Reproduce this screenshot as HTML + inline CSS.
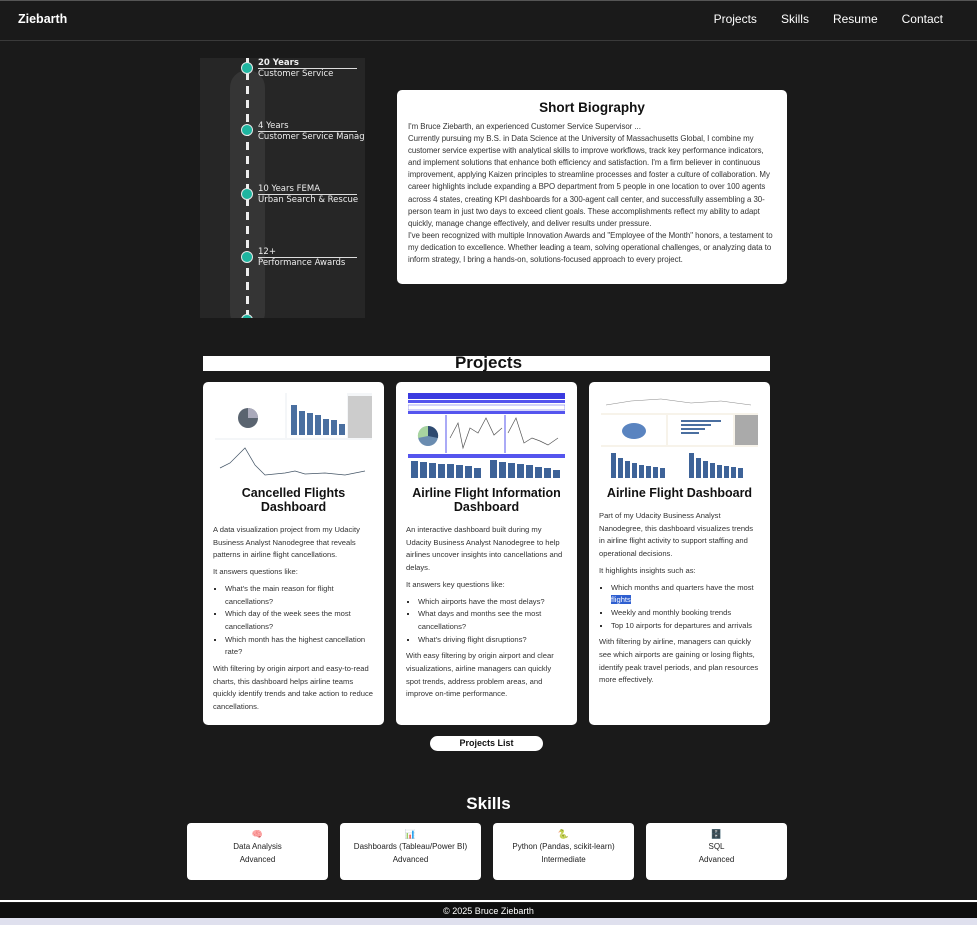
<!DOCTYPE html>
<html><head><meta charset="utf-8">
<style>
*{box-sizing:border-box;margin:0;padding:0}
html,body{width:977px;height:925px;overflow:hidden}
body{background:#1a1a1a;font-family:"Liberation Sans",Arial,sans-serif;color:#333;position:relative}
.nav{position:absolute;left:0;top:0;width:977px;height:41px;border-top:1px solid #555;border-bottom:1px solid #3a3a3a;background:#1a1a1a}
.nav .logo{position:absolute;left:18px;top:11px;color:#fff;font-weight:bold;font-size:12.5px}
.nav .links{position:absolute;right:34px;top:11px;color:#fff;font-size:12px}
.nav .links span{margin-left:24px}
.tl{position:absolute;left:200px;top:58px;width:165px;height:260px;background:#262626;overflow:hidden}
.pill{position:absolute;left:30px;top:12px;width:35px;height:260px;border-radius:18px;background:#353535}
.dash{position:absolute;left:46px;top:0;width:3px;height:260px;background:repeating-linear-gradient(#eee 0 8px,transparent 8px 14px)}
.dot{position:absolute;left:41px;width:12px;height:12px;border-radius:50%;background:#1fb5a0;border:1.5px solid #e8e8e8}
.ti{position:absolute;left:58px;color:#eee;font-family:"DejaVu Sans",sans-serif;font-size:8.5px;line-height:10px;white-space:nowrap}
.ti .h{border-bottom:1px solid #ddd;width:99px;display:block}
.bio{position:absolute;left:397px;top:90px;width:390px;height:194px;background:#fff;border-radius:5px;padding:10px 11px}
.bio h2{text-align:center;font-size:13.5px;color:#111;margin-bottom:6px}
.bio p{font-size:7.9px;line-height:12.1px;color:#333;letter-spacing:-0.05px}
.pbar{position:absolute;left:203px;top:356px;width:567px;height:15px;background:#fff}
.ptitle{position:absolute;left:0;width:977px;top:353px;text-align:center;font-size:17px;font-weight:bold;color:#111}
.card{position:absolute;top:382px;width:181px;height:343px;background:#fff;border-radius:5px;padding:11px 10px}
.card svg{display:block;width:157px;height:87px;margin:0 2px}
.card h3{text-align:center;font-size:12.5px;color:#111;line-height:14px;margin:6px 0 10px}
.card p,.card li{font-size:7.6px;line-height:12.7px;color:#333}
.card p{margin-bottom:4px}
.card ul{padding-left:10px;margin-bottom:4px;font-size:7.6px}
.card ul li{list-style:none;position:relative;padding-left:2px}
.card ul li:before{content:"";position:absolute;left:-9px;top:5px;width:2px;height:2px;background:#333}
.btn{position:absolute;left:430px;top:736px;width:113px;height:15px;border-radius:8px;background:#fff;text-align:center;font-size:9px;font-weight:bold;line-height:15px;color:#111}
.stitle{position:absolute;left:0;width:977px;top:794px;text-align:center;font-size:17px;font-weight:bold;color:#fff}
.sk{position:absolute;top:823px;width:141px;height:57px;background:#fff;border-radius:4px;text-align:center;font-size:8px;line-height:12.5px;padding-top:5px;color:#222}
.ico{font-size:9px;display:block;height:13px;line-height:13px}
.f1{position:absolute;left:0;top:900px;width:977px;height:2px;background:#fff}
.f2{position:absolute;left:0;top:903px;width:977px;height:15px;background:#0e0e0e;color:#fff;text-align:center;font-size:9px;line-height:17px}
.f3{position:absolute;left:0;top:918px;width:977px;height:7px;background:#dfe0ee}
.hl{background:#2f5fd0;color:#fff}
</style></head><body>
<div class="nav"><div class="logo">Ziebarth</div><div class="links"><span>Projects</span><span>Skills</span><span>Resume</span><span>Contact</span></div></div>

<div class="tl">
<div class="pill"></div><div class="dash"></div>
<div class="dot" style="top:4px"></div>
<div class="dot" style="top:66px"></div>
<div class="dot" style="top:130px"></div>
<div class="dot" style="top:193px"></div>
<div class="dot" style="top:256px"></div>
<div class="ti" style="top:0"><b class="h">20 Years</b>Customer Service</div>
<div class="ti" style="top:63px"><span class="h">4 Years</span>Customer Service Manager</div>
<div class="ti" style="top:126px"><span class="h">10 Years FEMA</span>Urban Search &amp; Rescue</div>
<div class="ti" style="top:189px"><span class="h">12+</span>Performance Awards</div>
</div>

<div class="bio"><h2>Short Biography</h2>
<p>I'm Bruce Ziebarth, an experienced Customer Service Supervisor ...<br>
Currently pursuing my B.S. in Data Science at the University of Massachusetts Global, I combine my customer service expertise with analytical skills to improve workflows, track key performance indicators, and implement solutions that enhance both efficiency and satisfaction. I'm a firm believer in continuous improvement, applying Kaizen principles to streamline processes and foster a culture of collaboration. My career highlights include expanding a BPO department from 5 people in one location to over 100 agents across 4 states, creating KPI dashboards for a 300-agent call center, and successfully assembling a 30-person team in just two days to exceed client goals. These accomplishments reflect my ability to adapt quickly, manage change effectively, and deliver results under pressure.<br>
I've been recognized with multiple Innovation Awards and "Employee of the Month" honors, a testament to my dedication to excellence. Whether leading a team, solving operational challenges, or analyzing data to inform strategy, I bring a hands-on, solutions-focused approach to every project.</p></div>

<div class="pbar"></div><div class="ptitle">Projects</div>

<div class="card" style="left:203px">
<svg viewBox="0 0 157 87"><rect width="157" height="87" fill="#f4f6f8"/><rect x="0" y="0" width="70" height="45" fill="#fff"/><circle cx="33" cy="25" r="10" fill="#5a6470"/><path d="M33 25 L33 15 A10 10 0 0 1 43 25Z" fill="#aab"/><rect x="72" y="0" width="60" height="45" fill="#fff"/><g fill="#4a6fa0"><rect x="76" y="12" width="6" height="30"/><rect x="84" y="18" width="6" height="24"/><rect x="92" y="20" width="6" height="22"/><rect x="100" y="22" width="6" height="20"/><rect x="108" y="26" width="6" height="16"/><rect x="116" y="27" width="6" height="15"/><rect x="124" y="31" width="6" height="11"/></g><rect x="133" y="3" width="24" height="42" fill="#ccc"/><rect x="0" y="47" width="157" height="40" fill="#fff"/><polyline points="5,75 15,70 30,55 40,72 50,82 70,80 80,78 90,81 110,80 130,82 150,78" fill="none" stroke="#456" stroke-width=".7"/></svg>
<h3>Cancelled Flights Dashboard</h3>
<p>A data visualization project from my Udacity Business Analyst Nanodegree that reveals patterns in airline flight cancellations.</p>
<p>It answers questions like:</p>
<ul><li>What's the main reason for flight cancellations?</li><li>Which day of the week sees the most cancellations?</li><li>Which month has the highest cancellation rate?</li></ul>
<p>With filtering by origin airport and easy-to-read charts, this dashboard helps airline teams quickly identify trends and take action to reduce cancellations.</p>
</div>

<div class="card" style="left:396px">
<svg viewBox="0 0 157 87"><rect width="157" height="87" fill="#fff"/><rect width="157" height="6" fill="#3b3be0"/><rect y="7" width="157" height="3" fill="#5555ee"/><rect y="18" width="157" height="3" fill="#5555ee"/><rect y="12" width="157" height="5" fill="#fff" stroke="#55e" stroke-width=".5"/><circle cx="20" cy="43" r="10" fill="#6a8cb0"/><path d="M20 43 L20 33 A10 10 0 0 1 30 45Z" fill="#2e4a70"/><path d="M20 43 L10 45 A10 10 0 0 1 20 33Z" fill="#a8d4a0"/><line x1="38" y1="22" x2="38" y2="60" stroke="#55e"/><line x1="97" y1="22" x2="97" y2="60" stroke="#55e"/><polyline points="42,45 50,30 55,55 62,35 70,40 78,25 86,42 94,35" fill="none" stroke="#555" stroke-width=".7"/><polyline points="100,40 108,25 116,50 124,45 132,48 140,52 150,45" fill="none" stroke="#555" stroke-width=".7"/><rect y="61" width="157" height="4" fill="#5555ee"/><g fill="#3e6398"><rect x="3" y="68" width="7" height="17"/><rect x="12" y="69" width="7" height="16"/><rect x="21" y="70" width="7" height="15"/><rect x="30" y="71" width="7" height="14"/><rect x="39" y="71" width="7" height="14"/><rect x="48" y="72" width="7" height="13"/><rect x="57" y="73" width="7" height="12"/><rect x="66" y="75" width="7" height="10"/><rect x="82" y="67" width="7" height="18"/><rect x="91" y="69" width="7" height="16"/><rect x="100" y="70" width="7" height="15"/><rect x="109" y="71" width="7" height="14"/><rect x="118" y="72" width="7" height="13"/><rect x="127" y="74" width="7" height="11"/><rect x="136" y="75" width="7" height="10"/><rect x="145" y="77" width="7" height="8"/></g></svg>
<h3>Airline Flight Information Dashboard</h3>
<p>An interactive dashboard built during my Udacity Business Analyst Nanodegree to help airlines uncover insights into cancellations and delays.</p>
<p>It answers key questions like:</p>
<ul><li>Which airports have the most delays?</li><li>What days and months see the most cancellations?</li><li>What's driving flight disruptions?</li></ul>
<p>With easy filtering by origin airport and clear visualizations, airline managers can quickly spot trends, address problem areas, and improve on-time performance.</p>
</div>

<div class="card" style="left:589px">
<svg viewBox="0 0 157 87"><rect width="157" height="87" fill="#f7f3ea"/><rect width="157" height="20" fill="#fff"/><polyline points="5,12 30,8 60,6 90,10 120,8 150,12" fill="none" stroke="#888" stroke-width=".5"/><rect y="22" width="65" height="30" fill="#fff"/><ellipse cx="33" cy="38" rx="12" ry="8" fill="#5a84c0"/><rect x="67" y="22" width="65" height="30" fill="#fff"/><g fill="#4a6fa0"><rect x="80" y="27" width="40" height="2"/><rect x="80" y="31" width="30" height="2"/><rect x="80" y="35" width="24" height="2"/><rect x="80" y="39" width="18" height="2"/></g><rect x="134" y="22" width="23" height="30" fill="#aaa"/><rect y="54" width="157" height="33" fill="#fff"/><g fill="#3e6398"><rect x="10" y="60" width="5" height="25"/><rect x="17" y="65" width="5" height="20"/><rect x="24" y="68" width="5" height="17"/><rect x="31" y="70" width="5" height="15"/><rect x="38" y="72" width="5" height="13"/><rect x="45" y="73" width="5" height="12"/><rect x="52" y="74" width="5" height="11"/><rect x="59" y="75" width="5" height="10"/><rect x="88" y="60" width="5" height="25"/><rect x="95" y="65" width="5" height="20"/><rect x="102" y="68" width="5" height="17"/><rect x="109" y="70" width="5" height="15"/><rect x="116" y="72" width="5" height="13"/><rect x="123" y="73" width="5" height="12"/><rect x="130" y="74" width="5" height="11"/><rect x="137" y="75" width="5" height="10"/></g></svg>
<h3>Airline Flight Dashboard</h3>
<p>Part of my Udacity Business Analyst Nanodegree, this dashboard visualizes trends in airline flight activity to support staffing and operational decisions.</p>
<p>It highlights insights such as:</p>
<ul><li>Which months and quarters have the most <span class="hl">flights</span></li><li>Weekly and monthly booking trends</li><li>Top 10 airports for departures and arrivals</li></ul>
<p>With filtering by airline, managers can quickly see which airports are gaining or losing flights, identify peak travel periods, and plan resources more effectively.</p>
</div>

<div class="btn">Projects List</div>

<div class="stitle">Skills</div>
<div class="sk" style="left:187px"><span class="ico">🧠</span>Data Analysis<br>Advanced</div>
<div class="sk" style="left:340px"><span class="ico">📊</span>Dashboards (Tableau/Power BI)<br>Advanced</div>
<div class="sk" style="left:493px"><span class="ico">🐍</span>Python (Pandas, scikit-learn)<br>Intermediate</div>
<div class="sk" style="left:646px"><span class="ico">🗄️</span>SQL<br>Advanced</div>

<div class="f1"></div><div class="f2">© 2025 Bruce Ziebarth</div><div class="f3"></div>
</body></html>
